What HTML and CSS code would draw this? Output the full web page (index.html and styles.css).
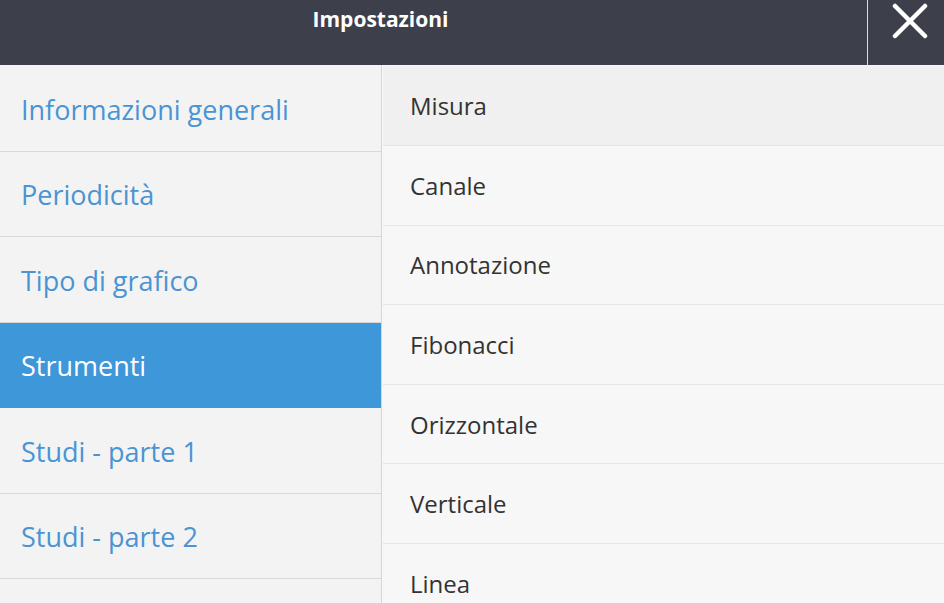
FILE: index.html
```html
<!DOCTYPE html>
<html lang="it">
<head>
  <meta charset="UTF-8" />
  <title>Impostazioni</title>
  <link rel="stylesheet" href="styles.css">
</head>
<body>
  <div class="header">
    <div class="title">Impostazioni</div>
    <button class="closeBtn" title="Chiudi">
      <svg width="36" height="36" viewBox="0 0 36 36">
        <path d="M3 3 L33 33 M33 3 L3 33" stroke="#fff" stroke-width="4.5" stroke-linecap="round" fill="none"/>
      </svg>
    </button>
  </div>
  <div class="panel">
    <ul class="menu">
      <li>Informazioni generali</li>
      <li>Periodicità</li>
      <li>Tipo di grafico</li>
      <li class="active">Strumenti</li>
      <li>Studi - parte 1</li>
      <li>Studi - parte 2</li>
      <li></li>
    </ul>
    <ul class="options">
      <li class="hover">Misura</li>
      <li>Canale</li>
      <li>Annotazione</li>
      <li>Fibonacci</li>
      <li>Orizzontale</li>
      <li>Verticale</li>
      <li>Linea</li>
    </ul>
  </div>
</body>
</html>
```

FILE: styles.css
```css
html, body {
  margin: 0;
  padding: 0;
  height: 100%;
  overflow: hidden;
  background: #f7f7f7;
  font-family: "Open Sans", Arial, sans-serif;
}
.header {
  height: 65px;
  background: #3d3f4a;
  display: flex;
}
.title {
  flex: 1;
  color: #fff;
  font-weight: bold;
  font-size: 21px;
  text-align: center;
  padding: 5px 106px 0 0;
}
.closeBtn {
  width: 77px;
  border: none;
  border-left: 1px solid #dcdcdc;
  background: none;
  padding: 3px 0 0 7px;
  display: flex;
  justify-content: center;
  align-items: flex-start;
  cursor: pointer;
}
.panel {
  display: flex;
}
ul {
  list-style: none;
  margin: 0;
  padding: 0;
}
.menu {
  width: 382px;
  background: #f3f3f3;
  border-right: 1px solid #d6d6d6;
  height: 538px;
  padding-top: 1px;
  box-sizing: border-box;
  overflow: hidden;
}
.menu li {
  box-sizing: border-box;
  height: 85.5px;
  border-bottom: 1px solid #d8d8d8;
  display: flex;
  align-items: center;
  padding: 2px 0 0 21px;
  font-size: 27px;
  color: #4a94d3;
}
.menu li.active {
  background: #3d97d9;
  color: #fff;
  border-bottom-color: #3d97d9;
}
.options {
  flex: 1;
  margin-left: 1px;
  padding-top: 1px;
}
.options li {
  box-sizing: border-box;
  height: 79.6px;
  border-bottom: 1px solid #e6e6e6;
  display: flex;
  align-items: center;
  padding-left: 27px;
  font-size: 24px;
  color: #333;
}
.options li.hover {
  height: 80px;
  background: #f0f0f0;
}
```
